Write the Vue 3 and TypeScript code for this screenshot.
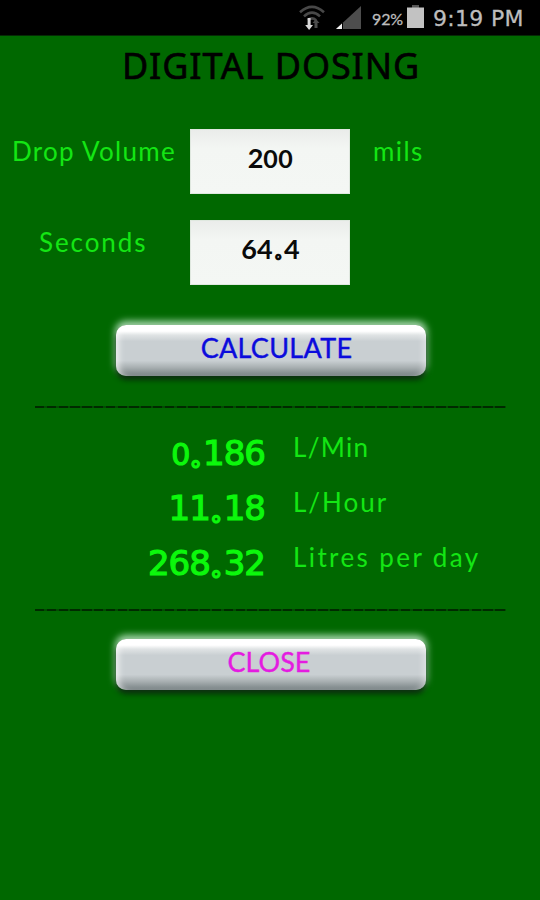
<script setup lang="ts">
interface Field {
  key: string
  label: string
  value: string
  unit: string
}

interface Result {
  key: string
  value: string
  unit: string
}

const fields: Field[] = [
  { key: 'volume', label: 'Drop Volume', value: '200', unit: 'mils' },
  { key: 'seconds', label: 'Seconds', value: '64.4', unit: '' },
]

const results: Result[] = [
  { key: 'minute', value: '0.186', unit: 'L/Min' },
  { key: 'hour', value: '11.18', unit: 'L/Hour' },
  { key: 'day', value: '268.32', unit: 'Litres per day' },
]

const glyphClass = (ch: string): string =>
  ch === '.' ? 'dot' : ch === '0' ? 'zero' : 'digit'
</script>

<template>
  <div class="screen">
    <header class="status">
      <svg class="wifi" viewBox="0 0 26 26">
        <g fill="none" stroke="#484848" stroke-width="2.6">
          <path d="M1 8.2Q13-2.6 25 8.2" />
          <path d="M5 12.4Q13 5 21 12.4" />
          <path d="M9 16.2Q13 12.4 17 16.2" />
        </g>
        <path d="M8.600 14h3v7h2.400l-3.900 5L6.200 21h2.400z" fill="#d8d8d8" />
        <path d="M15.500 24v-5h-2l3.500-4 3.500 4h-2v5z" fill="#4c4c4c" />
      </svg>
      <svg class="signal" viewBox="0 0 25 23">
        <path d="M25 0V23H0z" fill="#4d4d4d" />
        <path d="M6 17.500V23H0z" fill="#f2f2f2" />
        <path d="M6.500 17V23" stroke="#000" stroke-width="1" />
      </svg>
      <span class="percent">92%</span>
      <svg class="battery" viewBox="0 0 17 23">
        <path d="M5 0h7v3H5z" fill="#555" />
        <path d="M0 2.500h17V23H0z" fill="#c2c2c2" />
      </svg>
      <span class="clock">9:19 PM</span>
    </header>

    <h1 class="title">DIGITAL DOSING</h1>

    <section class="form">
      <div v-for="f in fields" :key="f.key" class="field" :class="f.key">
        <span class="label">{{ f.label }}</span>
        <div class="box"><span class="box-text"><span v-for="(ch, i) in f.value" :key="i" :class="glyphClass(ch)">{{ ch }}</span></span></div>
        <span class="unit">{{ f.unit }}</span>
      </div>
    </section>

    <button class="btn calculate" type="button"><span>CALCULATE</span></button>

    <div class="rule"></div>

    <section class="results">
      <div v-for="r in results" :key="r.key" class="result" :class="r.key">
        <span class="value"><span v-for="(ch, i) in r.value" :key="i" :class="glyphClass(ch)">{{ ch }}</span></span>
        <span class="measure">{{ r.unit }}</span>
      </div>
    </section>

    <div class="rule lower"></div>

    <button class="btn close" type="button"><span>CLOSE</span></button>
  </div>
</template>

<style>
body {
  margin: 0;
  background: #006800;
}
</style>

<style scoped>
.screen {
  width: 540px;
  height: 900px;
  overflow: hidden;
  background: #006800;
  font-family: Lato, "Noto Sans", sans-serif;
  display: flex;
  flex-direction: column;
  white-space: nowrap;
}
.status {
  height: 35px;
  flex: none;
  background: #000;
  border-bottom: 1px solid #052a05;
  display: flex;
  align-items: flex-start;
  padding-left: 299px;
  color: #bdbdbd;
}
.wifi { width: 26px; height: 26px; margin-top: 4px; }
.signal { width: 25px; height: 23px; margin: 6px 0 0 11px; }
.percent {
  width: 46px;
  padding-left: 11px;
  box-sizing: border-box;
  font-size: 16px;
  line-height: 37px;
  letter-spacing: -0.1px;
  -webkit-text-stroke: 0.3px #bdbdbd;
}
.battery { width: 17px; height: 23px; margin-top: 5px; }
.clock {
  margin-left: 9px;
  font-family: "DejaVu Sans", sans-serif;
  font-size: 22px;
  line-height: 38px;
  letter-spacing: 0.3px;
  -webkit-text-stroke: 0.3px #bdbdbd;
}
.title {
  margin: 0;
  height: 57px;
  line-height: 59px;
  padding-left: 2px;
  text-align: center;
  font-family: "Noto Sans", sans-serif;
  font-weight: 400;
  font-size: 36px;
  letter-spacing: 0.9px;
  color: #000;
  -webkit-text-stroke: 0.6px #000;
}
.form {
  margin-top: 36px;
  display: grid;
  row-gap: 26px;
}
.field {
  display: grid;
  grid-template-columns: 190px 160px 1fr;
  height: 65px;
}
.label, .unit {
  font-size: 26px;
  line-height: 45px;
  color: #14e614;
}
.label { padding-left: 12px; letter-spacing: 1.3px; }
.seconds .label { padding-left: 39px; letter-spacing: 1.9px; }
.unit { padding-left: 23px; letter-spacing: 1.4px; }
.box {
  background: linear-gradient(#eaecea, #f3f6f3 30%, #f4f7f4);
  box-shadow: inset 0 0 0 1px #dfe8df;
  text-align: center;
}
.box-text {
  font-weight: 700;
  font-size: 26px;
  line-height: 57px;
  color: #0a0a0a;
  padding-left: 1px;
}
.box .digit { font-size: 27px; }
.box .zero { font-size: 25px; letter-spacing: 0.5px; }
.btn {
  flex: none;
  width: 310px;
  height: 51px;
  margin: 40px 0 0 116px;
  padding: 0;
  border: 0;
  border-radius: 10px;
  text-align: center;
  font-family: Lato, sans-serif;
  font-size: 27px;
  background: linear-gradient(#fff 0, #fff 12%, #dfe3e4 20%, #c9cfd2 32%, #c9cfd2 70%, #a9b0b2 83%, #768082 100%);
  box-shadow: inset 7px 0 6px -4px rgba(255, 255, 255, 0.65), inset -7px 0 6px -4px rgba(255, 255, 255, 0.4),
    0 4px 5px 0 rgba(0, 25, 5, 0.8), 0 -3px 7px 1px rgba(225, 255, 235, 0.75);
}
.btn span { display: block; height: 51px; line-height: 45px; -webkit-text-stroke: 0.4px currentColor; }
.calculate { color: #0b0bdc; letter-spacing: 0.3px; }
.calculate span { padding-left: 11px; }
.close { color: #e41be0; margin-top: 28px; }
.close span { padding-right: 4px; }
.rule {
  flex: none;
  width: 471px;
  height: 2px;
  margin: 30px 0 0 35px;
  background: repeating-linear-gradient(90deg, #002a00 0, #002a00 9.500px, #004d00 9.500px, #004d00 11.800px);
}
.rule.lower { margin-top: 19px; }
.results {
  margin-top: 17px;
  display: grid;
  grid-auto-rows: 55px;
  height: 165px;
}
.result {
  display: grid;
  grid-template-columns: 265px 1fr;
}
.value {
  text-align: right;
  font-family: "DejaVu Sans", sans-serif;
  font-size: 34px;
  line-height: 56px;
  color: #0cf80c;
  -webkit-text-stroke: 1.2px #0cf80c;
  letter-spacing: -1px;
}
.value .zero { font-size: 30px; }
.dot {
  font-family: Lato, sans-serif;
  font-weight: 400;
  line-height: 0;
  letter-spacing: 0;
}
.value .dot {
  position: relative;
  top: 2px;
  font-size: 46px;
  color: #006800;
  -webkit-text-stroke: 3px #0cf80c;
  margin: 0 2px 0 1px;
}
.box .dot {
  font-size: 32px;
  color: #f4f7f4;
  -webkit-text-stroke: 2.4px #0a0a0a;
  margin: 0 2px;
}
.measure {
  padding-left: 28px;
  font-size: 26px;
  line-height: 45px;
  letter-spacing: 1.3px;
  color: #14e614;
}
.hour .measure { letter-spacing: 2px; }
.day .measure { letter-spacing: 2.4px; }
</style>
